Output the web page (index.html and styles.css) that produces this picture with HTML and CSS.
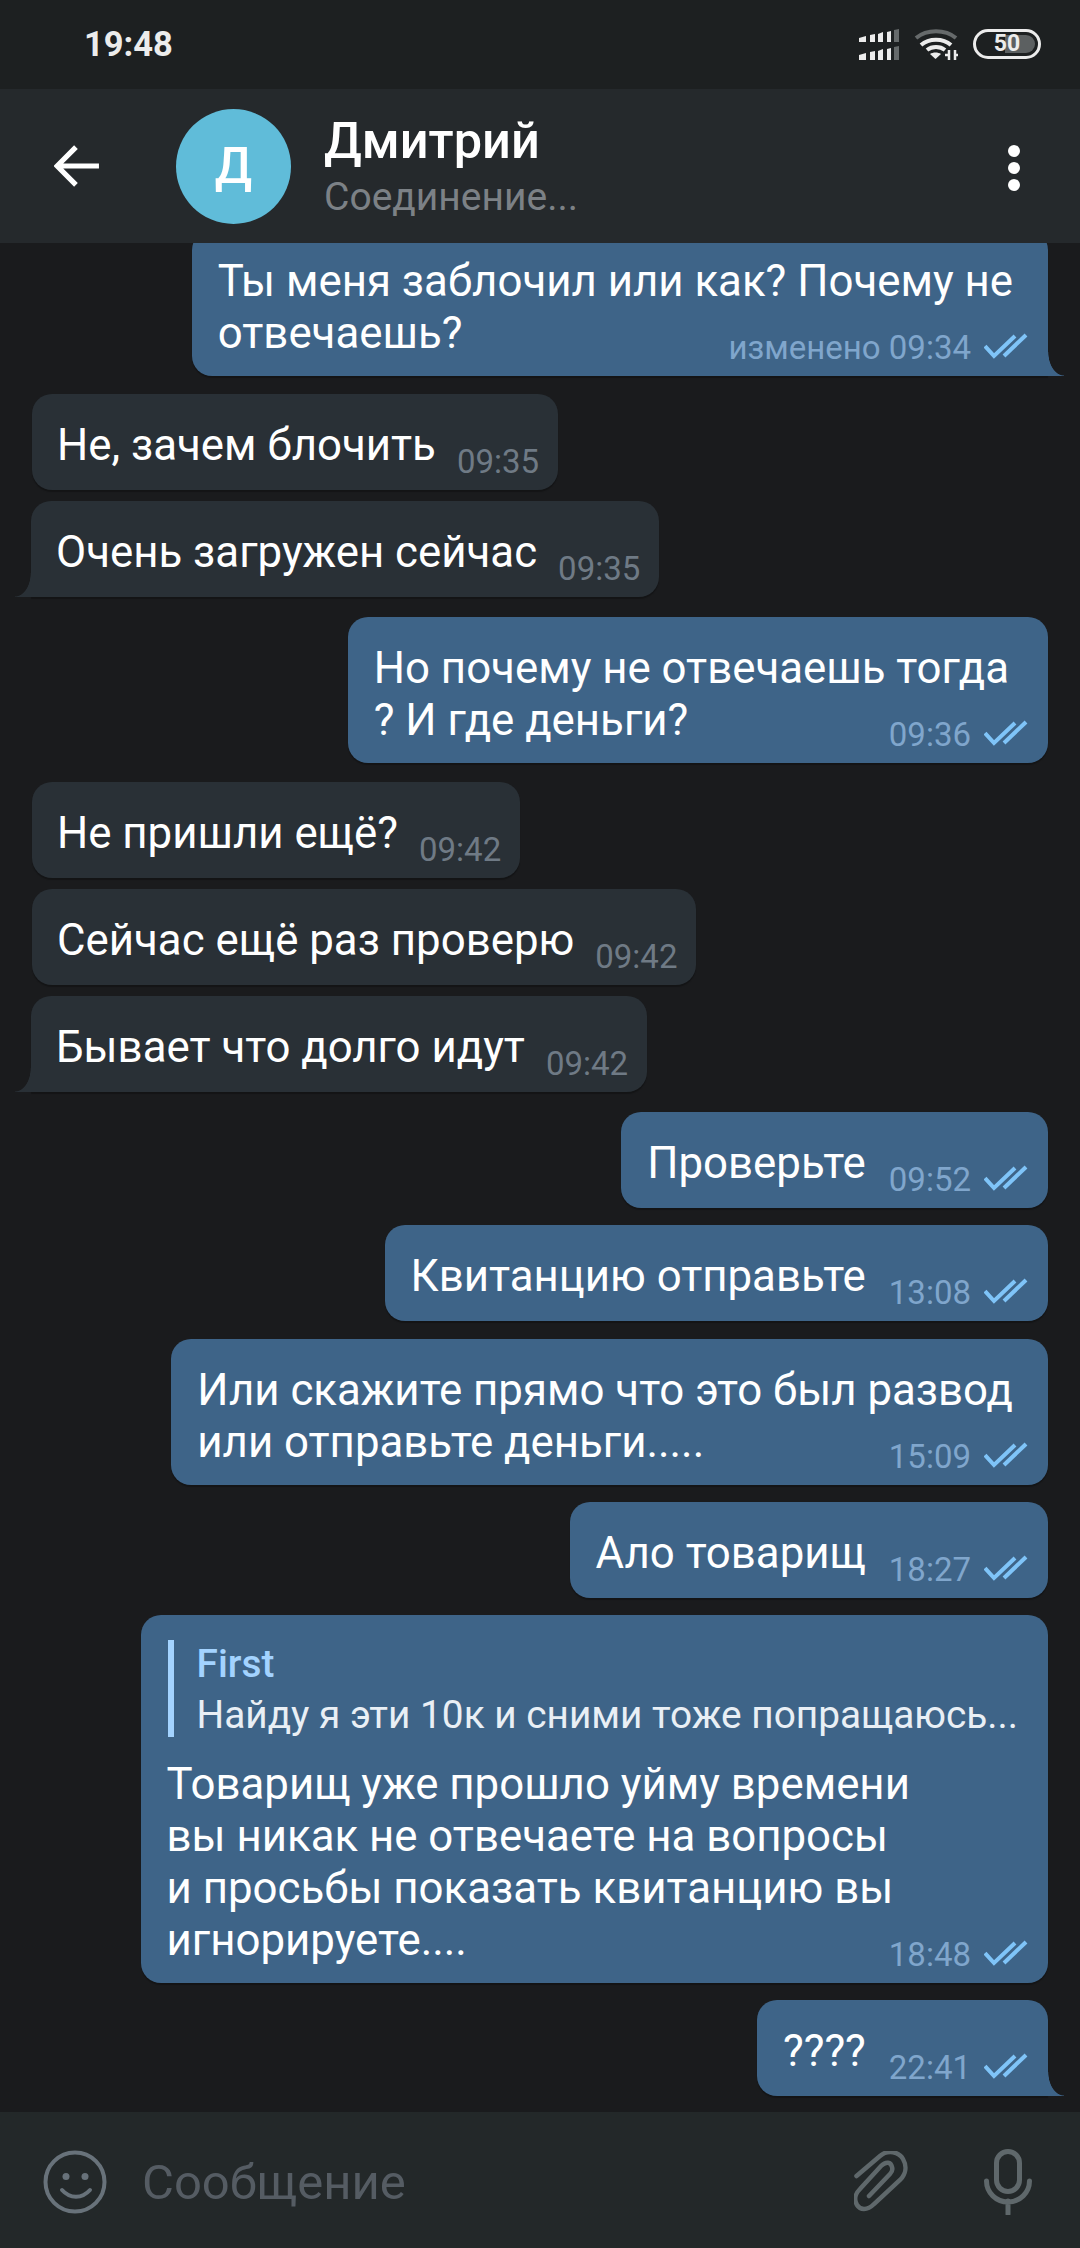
FILE: index.html
```html
<!DOCTYPE html>
<html>

<head>
    <meta charset="utf-8">
    <link rel="stylesheet" href="styles.css">
</head>

<body>
    <svg class="defs">
        <symbol id="checks" viewBox="0 0 44 26">
            <path d="M1 13l9 10L31 3" />
            <path d="M20 23L42 2" />
        </symbol>
    </svg>
    <div class="screen">
        <div class="status">
            <div class="clock">19:48</div>
            <div class="status-icons">
                <svg class="signal" viewBox="0 0 40 32">
                    <path class="on" d="M0 9l7-2v6H0zM11 6l5-1v8h-5zM19 5l5-2v10h-5zM28 3l4-1v11h-4z" />
                    <path class="dim" d="M35 1l5-1v13h-5z" />
                    <path class="on" d="M0 26l7-2v7H0zM11 23l5-1v9h-5zM19 22l5-2v11h-5zM28 20l4-1v12h-4z" />
                    <path class="dim" d="M35 18l5-1v14h-5z" />
                </svg>
                <svg class="wifi" viewBox="0 0 44 32">
                    <path class="arc-dim" d="M2 9c11-9 29-9 40 0" />
                    <path class="arc" d="M7 16c8-7 22-7 30 0M13 21c5-4 13-4 18 0" />
                    <path class="dot" d="M16 25c3-2 8-2 11 0l-5.500 5z" />
                    <path class="arc thin" d="M35 21v10M41 21v10M31 26h3M42 26h2" />
                </svg>
                <div class="battery">
                    <div class="battery-fill"></div>
                    <span class="battery-num">50</span>
                </div>
            </div>
        </div>

        <div class="header">
            <svg class="back" viewBox="0 0 44 44">
                <path d="M43 22H4M21 4L3 22l18 18" />
            </svg>
            <div class="avatar">Д</div>
            <div class="title">
                <div class="name">Дмитрий</div>
                <div class="sub">Соединение...</div>
            </div>
            <div class="dots"><i></i><i></i><i></i></div>
        </div>

        <div class="chat">
            <div class="msg out first tail">
                <div class="stack">
                    <div class="text">Ты меня заблочил или как? Почему не<br>отвечаешь?</div>
                    <div class="meta">изменено 09:34 <svg class="ticks"><use href="#checks" /></svg></div>
                </div>
            </div>

            <div class="msg in">
                <div class="text">Не, зачем блочить</div>
                <div class="meta">09:35</div>
            </div>
            <div class="msg in tail">
                <div class="text">Очень загружен сейчас</div>
                <div class="meta">09:35</div>
            </div>

            <div class="msg out roomy">
                <div class="stack">
                    <div class="text">Но почему не отвечаешь тогда<br>? И где деньги?</div>
                    <div class="meta">09:36 <svg class="ticks"><use href="#checks" /></svg></div>
                </div>
            </div>

            <div class="msg in">
                <div class="text">Не пришли ещё?</div>
                <div class="meta">09:42</div>
            </div>
            <div class="msg in">
                <div class="text">Сейчас ещё раз проверю</div>
                <div class="meta">09:42</div>
            </div>
            <div class="msg in tail">
                <div class="text">Бывает что долго идут</div>
                <div class="meta">09:42</div>
            </div>

            <div class="msg out">
                <div class="text">Проверьте</div>
                <div class="meta">09:52 <svg class="ticks"><use href="#checks" /></svg></div>
            </div>
            <div class="msg out">
                <div class="text">Квитанцию отправьте</div>
                <div class="meta">13:08 <svg class="ticks"><use href="#checks" /></svg></div>
            </div>
            <div class="msg out">
                <div class="stack">
                    <div class="text">Или скажите прямо что это был развод<br>или отправьте деньги.....</div>
                    <div class="meta">15:09 <svg class="ticks"><use href="#checks" /></svg></div>
                </div>
            </div>
            <div class="msg out">
                <div class="text">Ало товарищ</div>
                <div class="meta">18:27 <svg class="ticks"><use href="#checks" /></svg></div>
            </div>
            <div class="msg out">
                <div class="stack">
                    <div>
                        <div class="reply">
                            <div class="reply-name">First</div>
                            <div class="reply-text">Найду я эти 10к и сними тоже попращаюсь...</div>
                        </div>
                        <div class="text">Товарищ уже прошло уйму времени<br>вы никак не отвечаете на вопросы<br>и просьбы показать квитанцию вы<br>игнорируете....</div>
                    </div>
                    <div class="meta">18:48 <svg class="ticks"><use href="#checks" /></svg></div>
                </div>
            </div>
            <div class="msg out tail">
                <div class="text">????</div>
                <div class="meta">22:41 <svg class="ticks"><use href="#checks" /></svg></div>
            </div>
        </div>

        <div class="composer">
            <svg class="smile" viewBox="0 0 66 66">
                <circle cx="33" cy="33" r="29.500" />
                <path d="M20 41c8 9 20 9 28 0" />
                <circle class="eye" cx="24" cy="27.500" r="3.500" />
                <circle class="eye" cx="43" cy="27.500" r="3.500" />
            </svg>
            <div class="placeholder">Сообщение</div>
            <svg class="clip" viewBox="0 0 54 62">
                <path d="M2.500 25L26 5C34-2 45 1 49 8c4 7 3 15-3 21L20 53c-7 7-14 6-17 1-3-5-2-11 3-16l21-23c5-5 10-4 11 1 1 3 0 5-2 7L15 45" />
            </svg>
            <svg class="mic" viewBox="0 0 48 66">
                <rect x="12.500" y="2.500" width="23" height="40" rx="11.500" />
                <path d="M2.500 32a21.500 21 0 0 0 43 0M24 52v13" />
            </svg>
        </div>
    </div>
</body>

</html>
```

FILE: styles.css
```css
* {
    margin: 0;
    box-sizing: border-box;
}

body {
    font-family: Roboto, sans-serif;
    color: #fff;
    background-color: #1a1b1d;
}

.defs {
    display: none;
}

.screen {
    width: 1080px;
    height: 2248px;
    display: flex;
    flex-direction: column;
    overflow: hidden;
}

/* status bar */
.status {
    height: 89px;
    flex: none;
    display: flex;
    justify-content: space-between;
    padding: 26px 39px 0 84px;
    background-color: #1d2021;
}

.clock {
    font-size: 34.500px;
    line-height: 36px;
    font-weight: 700;
    color: #ececec;
}

.status-icons {
    display: flex;
    align-items: flex-start;
    padding-top: 3px;
}

.signal {
    width: 40px;
    height: 32px;
    margin-right: 15px;
}

.signal .on {
    fill: #ececec;
}

.signal .dim {
    fill: #666a6b;
}

.wifi {
    width: 44px;
    height: 32px;
    margin-right: 15px;
    fill: none;
}

.wifi .arc {
    stroke: #ececec;
    stroke-width: 4;
}

.wifi .thin {
    stroke-width: 2.500;
}

.wifi .arc-dim {
    stroke: #666a6b;
    stroke-width: 4;
}

.wifi .dot {
    fill: #ececec;
}

.battery {
    position: relative;
    width: 68px;
    height: 30px;
    border: 3px solid #ececec;
    border-radius: 15px;
    text-align: center;
}

.battery-fill {
    position: absolute;
    top: 3px;
    right: 3px;
    bottom: 3px;
    width: 30px;
    border-radius: 0 9px 9px 0;
    background-color: #5c6061;
}

.battery-num {
    position: relative;
    display: block;
    font-size: 23px;
    line-height: 24px;
    font-weight: 700;
    color: #ececec;
}

/* header */
.header {
    height: 154px;
    flex: none;
    display: flex;
    align-items: center;
    padding: 0 60px 0 54px;
    background-color: #25292c;
}

.back {
    width: 46px;
    height: 46px;
    flex: none;
    margin-right: 76px;
    fill: none;
    stroke: #fff;
    stroke-width: 5;
}

.avatar {
    width: 115px;
    height: 115px;
    flex: none;
    border-radius: 50%;
    margin-right: 33px;
    background-color: #60bcd9;
    font-size: 50px;
    font-weight: 500;
    line-height: 115px;
    text-align: center;
}

.title {
    flex: 1;
}

.name {
    font-size: 50.500px;
    font-weight: 500;
    line-height: 54px;
    margin-top: 2px;
    margin-bottom: 6px;
}

.sub {
    font-size: 39px;
    line-height: 46px;
    color: #7c8186;
}

.dots {
    margin-top: -2px;
}

.dots i {
    display: block;
    width: 12px;
    height: 12px;
    margin-top: 5px;
    border-radius: 50%;
    background-color: #fff;
}

/* messages */
.chat {
    flex: 1;
    display: flex;
    flex-direction: column;
    min-height: 0;
    overflow: hidden;
}

.msg {
    position: relative;
    display: flex;
    align-items: flex-end;
    gap: 23px;
    padding: 25px 20px 19px 26px;
    border-radius: 20px;
    margin-top: 17.300px;
    box-shadow: 0 2px 1px rgba(0, 0, 0, 0.25);
}

.msg.first {
    margin-top: -13px;
}

.msg.out {
    align-self: flex-end;
    margin-right: 32px;
    background-color: #3e6488;
}

.msg.in {
    align-self: flex-start;
    gap: 21px;
    margin-left: 32px;
    padding-left: 25px;
    padding-right: 19px;
    background-color: #293036;
}

.msg.in.tail {
    margin-left: 31px;
}

.in + .in {
    margin-top: 11px;
}

.in + .out {
    margin-top: 20px;
}

.out + .in {
    margin-top: 19px;
}

.msg.first + .in {
    margin-top: 18px;
}

.msg.out.tail {
    border-bottom-right-radius: 0;
}

.msg.in.tail {
    border-bottom-left-radius: 0;
}

.tail::after {
    content: "";
    position: absolute;
    bottom: 0;
    width: 16px;
    height: 24px;
}

.out.tail::after {
    right: -16px;
    background: radial-gradient(ellipse 16px 24px at 100% 0, transparent 96%, #3e6488 100%);
}

.in.tail::after {
    left: -16px;
    background: radial-gradient(ellipse 16px 24px at 0 0, transparent 96%, #293036 100%);
}

.text {
    font-size: 43.800px;
    line-height: 52px;
}

.meta {
    display: flex;
    align-items: center;
    gap: 13px;
    font-size: 33px;
    line-height: 38px;
    margin-bottom: -10px;
    white-space: nowrap;
}

.in .meta {
    color: #6f7a85;
}

.out .meta {
    color: #80a6cc;
}

.ticks {
    width: 44px;
    height: 26px;
    margin-bottom: 4px;
    fill: none;
    stroke: #7fc4f8;
    stroke-width: 4;
}

/* multi-line bubbles, meta sits over the last line */
.stack {
    display: grid;
    margin-bottom: -2px;
}

.stack > * {
    grid-area: 1 / 1;
}

.stack .meta {
    justify-self: end;
    align-self: end;
    margin-bottom: -8px;
}

.stack .text {
    padding-right: 15px;
}

.roomy .stack .text {
    padding-right: 19px;
}

.reply {
    border-left: 6px solid #a3d3ff;
    padding-left: 23px;
    height: 97px;
    margin: 0 10px 21px 1px;
    white-space: nowrap;
}

.reply-name {
    font-size: 38.800px;
    line-height: 48px;
    font-weight: 500;
    color: #a3d3ff;
}

.reply-text {
    font-size: 38.800px;
    line-height: 54px;
    color: #e9eff5;
}

/* bottom input */
.composer {
    height: 136px;
    flex: none;
    display: flex;
    align-items: center;
    padding: 4px 48px 0 42px;
    background-color: #232829;
}

.smile {
    width: 66px;
    height: 66px;
    flex: none;
    margin-right: 34px;
    fill: none;
    stroke: #68727a;
    stroke-width: 4;
    stroke-linecap: round;
}

.smile .eye {
    fill: #68727a;
    stroke: none;
}

.placeholder {
    flex: 1;
    font-size: 49px;
    color: #555c63;
}

.clip {
    width: 54px;
    height: 62px;
    flex: none;
    margin-right: 76px;
    fill: none;
    stroke: #5f686b;
    stroke-width: 4.500;
    stroke-linecap: round;
}

.mic {
    width: 48px;
    height: 66px;
    flex: none;
    fill: none;
    stroke: #5f686b;
    stroke-width: 5;
    stroke-linecap: round;
}
```
